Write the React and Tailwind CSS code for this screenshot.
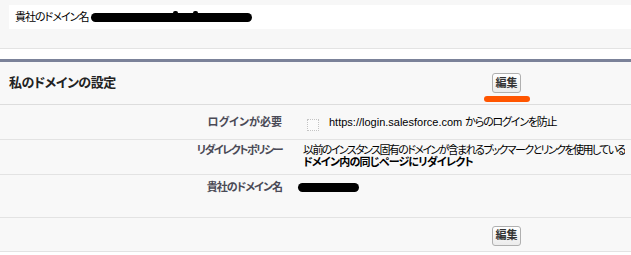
import React from 'react';

const FONT = "font-['Liberation_Sans','Noto_Sans_CJK_JP',sans-serif] [font-feature-settings:'palt']";

function EditButton() {
  return (
    <button className="h-[20px] w-[29px] rounded-[3px] border border-[#b0b0b0] bg-linear-to-b from-white to-[#ececec] text-[11px] font-bold leading-none text-[#333]">
      編集
    </button>
  );
}

function Redacted({ width }) {
  return <span className="block h-[9px] rounded-full bg-black" style={{ width }} />;
}

export default function App() {
  return (
    <div className={`h-[255px] w-[631px] overflow-hidden bg-white text-black ${FONT}`}>
      {/* Top domain bar */}
      <div className="h-[49px] border-b border-[#e3e3e3] bg-[#f7f7f7] pl-[9px] pt-[5px]">
        <div className="flex h-[24px] items-center gap-[3px] bg-white pl-[6px] text-[11px]">
          <span className="tracking-[-1px]">貴社のドメイン名</span>
          <span className="relative block">
            <Redacted width={161} />
            <span className="absolute left-[82px] top-[-2px] h-[4px] w-[5px] rounded-full bg-black" />
            <span className="absolute left-[102px] top-[-2px] h-[4px] w-[5px] rounded-full bg-black" />
          </span>
        </div>
      </div>
      <div className="h-[10px] bg-white" />

      {/* My domain settings block */}
      <div className="border-t-[3px] border-[#7b8299] bg-[#f8f8f8]">
        <div className="flex h-[43px] items-center border-b border-[#dddddd]">
          <h2 className="flex-1 pl-[9px] text-[13px] font-bold tracking-[-0.5px] text-[#222]">私のドメインの設定</h2>
          <div className="relative mr-[110px] flex">
            <EditButton />
            <span className="absolute left-[-8px] top-[23px] h-[6px] w-[46px] rounded-full bg-[#ff5500]" />
          </div>
        </div>

        <div className="flex h-[35px] items-center border-b border-[#e3e3e3] text-[11px]">
          <div className="w-[282px] text-right font-bold text-[#4a4a56]">ログインが必要</div>
          <div className="flex items-center pl-[25px]">
            <span className="mt-[5px] block h-[12px] w-[12px] border border-dotted border-[#c4c4c4] bg-[#fbfbfb]" />
            <span className="ml-[10px]">https://login.salesforce.com</span>
            <span className="ml-[3px] tracking-[-1.2px]">からのログインを防止</span>
          </div>
        </div>

        <div className="flex h-[35px] items-start border-b border-[#e3e3e3] pt-[4px] text-[11px] leading-[12px]">
          <div className="w-[282px] shrink-0 text-right font-bold tracking-[-1.5px] text-[#4a4a56]">リダイレクトポリシー</div>
          <div className="min-w-0 overflow-hidden whitespace-nowrap pl-[21px] tracking-[-1.6px]">
            <div>以前のインスタンス固有のドメインが含まれるブックマークとリンクを使用している</div>
            <div className="font-bold tracking-[-0.8px]">ドメイン内の同じページにリダイレクト</div>
          </div>
        </div>

        <div className="flex h-[43px] items-start border-b border-[#e3e3e3] pt-[6px] text-[11px] leading-[12px]">
          <div className="w-[282px] text-right font-bold tracking-[-1px] text-[#4a4a56]">貴社のドメイン名</div>
          <div className="pl-[16px] pt-[2px]">
            <Redacted width={61} />
          </div>
        </div>

        <div className="flex h-[34px] items-center border-b border-[#e3e3e3] pl-[492px] pt-[2px]">
          <EditButton />
        </div>
      </div>
    </div>
  );
}
